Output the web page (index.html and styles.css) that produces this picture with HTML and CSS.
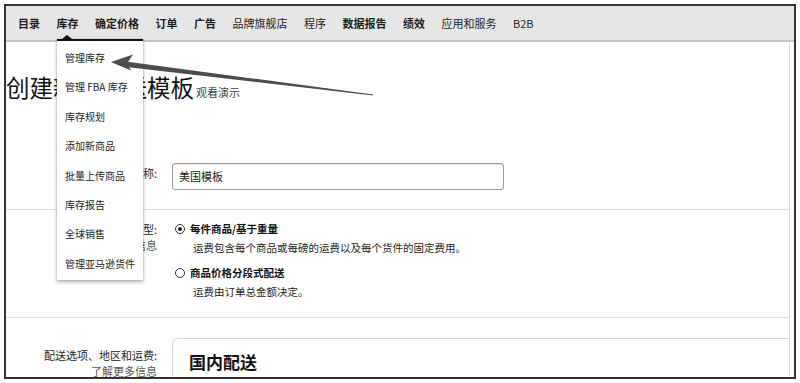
FILE: index.html
```html
<!DOCTYPE html>
<html lang="zh-CN">
<head>
<meta charset="utf-8">
<link rel="stylesheet" href="styles.css">
</head>
<body>
<div class="frame">
  <nav class="nav">
    <span class="nav-item strong">目录</span>
    <span class="nav-item strong active">库存</span>
    <span class="nav-item strong">确定价格</span>
    <span class="nav-item strong">订单</span>
    <span class="nav-item strong">广告</span>
    <span class="nav-item">品牌旗舰店</span>
    <span class="nav-item">程序</span>
    <span class="nav-item strong">数据报告</span>
    <span class="nav-item strong">绩效</span>
    <span class="nav-item">应用和服务</span>
    <span class="nav-item">B2B</span>
  </nav>

  <main class="content">
    <div class="title-row">
      <h1 class="title">创建新的配送模板</h1>
      <a class="demo">观看演示</a>
    </div>

    <section class="row row-name">
      <div class="label">模板名称:</div>
      <div class="field">
        <div class="input">美国模板</div>
      </div>
    </section>

    <section class="row row-type">
      <div class="label">
        <div>配送模板类型:</div>
        <div class="muted">了解更多信息</div>
      </div>
      <div class="field">
        <div class="option">
          <span class="radio checked"></span>
          <span class="opt-title">每件商品/基于重量</span>
        </div>
        <div class="opt-desc">运费包含每个商品或每磅的运费以及每个货件的固定费用。</div>
        <div class="option second">
          <span class="radio"></span>
          <span class="opt-title">商品价格分段式配送</span>
        </div>
        <div class="opt-desc">运费由订单总金额决定。</div>
      </div>
    </section>

    <section class="row row-ship">
      <div class="label label-ship">
        <div>配送选项、地区和运费:</div>
        <div class="muted">了解更多信息</div>
      </div>
      <div class="box">
        <h2 class="box-title">国内配送</h2>
      </div>
    </section>
  </main>

  <div class="dropdown">
    <span class="caret"></span>
    <ul class="menu">
      <li>管理库存</li>
      <li>管理 FBA 库存</li>
      <li>库存规划</li>
      <li>添加新商品</li>
      <li>批量上传商品</li>
      <li>库存报告</li>
      <li>全球销售</li>
      <li>管理亚马逊货件</li>
    </ul>
  </div>

  <svg class="arrow" width="800" height="383" viewBox="0 0 800 383">
    <polygon points="122,61 373,94.5 373,95.5 122,66.5" fill="#4d4d4d"/>
    <polygon points="111,62 133,54.5 127,63.5 131,70.5" fill="#4d4d4d"/>
  </svg>
</div>
</body>
</html>
```

FILE: styles.css
```css
* { box-sizing: border-box; }

html, body {
  margin: 0;
  padding: 0;
  background: #ffffff;
}

body {
  font-family: "Noto Sans CJK SC", "Noto Sans", sans-serif;
  color: #1a1a1a;
}

.frame {
  position: relative;
  margin: 4px;
  height: 375px;
  border: 2px solid #333333;
  overflow: hidden;
  background: #ffffff;
}

.nav {
  display: flex;
  align-items: center;
  gap: 16.5px;
  height: 36px;
  padding-left: 12px;
  background: #e6e6e6;
  border-bottom: 2px solid #c4c4c4;
  font-size: 11px;
  color: #1e1e1e;
}

.nav-item {
  white-space: nowrap;
  font-weight: 400;
}

.nav-item.strong {
  font-weight: 700;
}

.content {
  margin-right: 4px;
  border-right: 1px solid #dcdcdc;
  min-height: 340px;
}

.title-row {
  display: flex;
  align-items: baseline;
  padding-top: 30px;
  height: 60px;
}

.title {
  margin: 0;
  font-size: 23.5px;
  font-weight: 400;
  line-height: 30px;
  color: #111111;
  white-space: nowrap;
}

.demo {
  margin-left: 2px;
  font-size: 11px;
  color: #444444;
}

.row {
  display: grid;
  grid-template-columns: 151px 1fr;
  column-gap: 15px;
  border-bottom: 1px solid #dddddd;
}

.label {
  text-align: right;
  font-size: 11px;
  line-height: 16px;
  color: #222222;
}

.muted {
  color: #555555;
}

.row-name {
  padding: 61px 0 19px;
}

.row-name .label {
  padding-top: 2px;
}

.input {
  width: 332px;
  height: 27px;
  padding-left: 6px;
  border: 1px solid #9a9a9a;
  border-radius: 3px;
  box-shadow: inset 0 1px 1px rgba(0, 0, 0, 0.12);
  font-size: 11px;
  line-height: 25px;
  color: #222222;
}

.row-type {
  padding: 10px 0 16px;
}

.row-type .label {
  padding-top: 1px;
}

.field {
  font-size: 10.5px;
  line-height: 18px;
}

.option {
  display: flex;
  align-items: center;
}

.option.second {
  margin-top: 7px;
}

.radio {
  display: inline-flex;
  align-items: center;
  justify-content: center;
  width: 10px;
  height: 10px;
  margin-left: 3px;
  margin-right: 5px;
  border: 1px solid #333333;
  border-radius: 50%;
  background: #ffffff;
}

.radio.checked::after {
  content: "";
  width: 4px;
  height: 4px;
  border-radius: 50%;
  background: #222222;
}

.opt-title {
  font-weight: 700;
  color: #111111;
}

.opt-desc {
  margin-top: 1px;
  padding-left: 21px;
  color: #222222;
}

.row-ship {
  padding-top: 20px;
  border-bottom: none;
}

.label-ship {
  padding-top: 9px;
}

.box {
  height: 60px;
  padding: 11px 16px;
  border-top: 1px solid #d8d8d8;
  border-left: 1px solid #d8d8d8;
  border-top-left-radius: 6px;
}

.box-title {
  margin: 0;
  font-size: 17px;
  font-weight: 700;
  line-height: 24px;
  color: #111111;
}

.dropdown {
  position: absolute;
  left: 51px;
  top: 33px;
  width: 86px;
  background: #ffffff;
  border-top: 2px solid #111111;
  box-shadow: 0 2px 4px rgba(0, 0, 0, 0.3), 0 0 1px rgba(0, 0, 0, 0.35);
}

.caret {
  position: absolute;
  left: 5px;
  top: -6px;
  width: 0;
  height: 0;
  border-left: 5px solid transparent;
  border-right: 5px solid transparent;
  border-bottom: 4px solid #111111;
}

.menu {
  list-style: none;
  margin: 0;
  padding: 2px 0 2px 8px;
}

.menu li {
  height: 29.4px;
  line-height: 29.4px;
  font-size: 10px;
  color: #222222;
  white-space: nowrap;
}

.arrow {
  position: absolute;
  left: -6px;
  top: -6px;
  pointer-events: none;
}
```
